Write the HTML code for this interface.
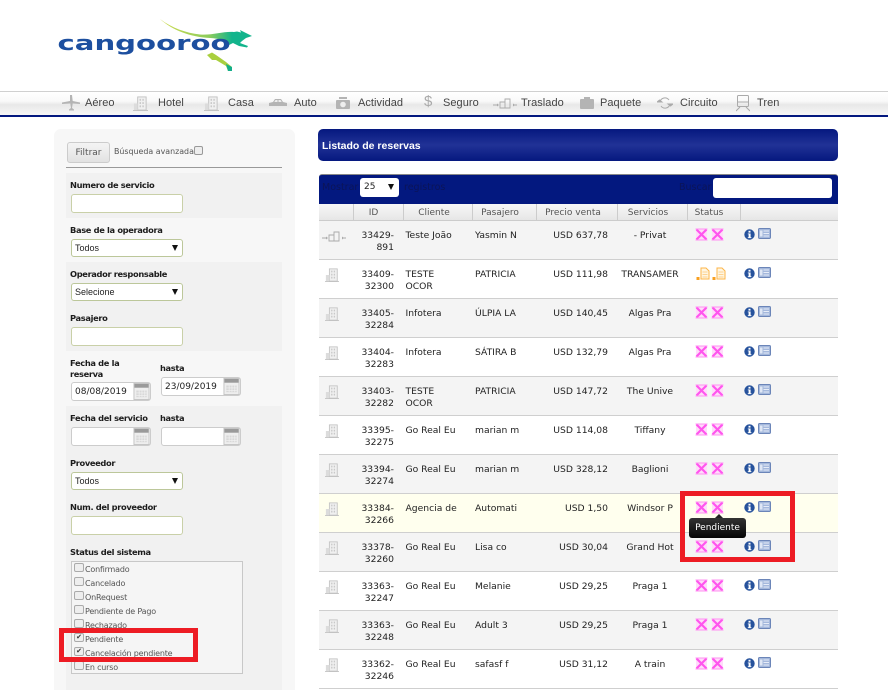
<!DOCTYPE html>
<html><head><meta charset="utf-8"><style>
*{box-sizing:border-box}
html,body{margin:0;padding:0;background:#fff}
body{width:888px;height:690px;overflow:hidden;position:relative;font-family:"DejaVu Sans",sans-serif;font-size:9px;color:#222}
.a{position:absolute}
.n{position:absolute;top:96px;font:11px/14px "Liberation Sans",sans-serif;color:#444;letter-spacing:.05px}
.ni{position:absolute;fill:#b4b4b4;stroke:none}
.l{position:absolute;left:70px;font:bold 8.3px/11px "DejaVu Sans",sans-serif;letter-spacing:-.35px;color:#1c1c1c;white-space:nowrap}
.in{position:absolute;background:#fff;border:1px solid #c9d0a8;border-radius:3px;height:19px;width:112px;left:71px}
.sel{position:absolute;background:#fff;border:1px solid #bcc79a;border-radius:3px;height:18px;width:112px;left:71px;font:9px/17px "Liberation Sans",sans-serif;padding-left:3px;color:#222}
.sel:after{content:"";position:absolute;right:4px;top:5px;border-left:3.5px solid transparent;border-right:3.5px solid transparent;border-top:6px solid #111}
.d{position:absolute;background:#fff;border:1px solid #ccc;border-radius:3px;height:19px;width:80px;font:9px/18px "DejaVu Sans",sans-serif;padding-left:3px;color:#222}
.cal{position:absolute;right:0;top:0}
.cb{position:absolute;left:74px;width:10px;height:9px;background:#eee;border:1px solid #aaa;border-radius:2px;font:bold 7px/7px "DejaVu Sans",sans-serif;color:#333;text-align:center}
.ct{position:absolute;left:85px;font:8px/11px "DejaVu Sans",sans-serif;letter-spacing:-.2px;color:#555;white-space:nowrap}
.r{position:absolute;left:319px;width:519px;height:39px;border-bottom:1px solid #cfcfcf;background:#fff}
.r.g{background:#f4f4f4}.r.y{background:#ffffee}
.r div{position:absolute;top:9px;line-height:11.5px;white-space:nowrap;color:#222;font-size:9.2px}
.r .id{left:34px;width:41px;text-align:right}
.r .c{left:86.5px}.r .p{left:156px}
.r .v{left:217px;width:72px;text-align:right}
.r .s{left:296px;width:70px;text-align:center}
.r svg{position:absolute}
.r .b{left:6px;top:8px}
.r .x1{left:376px;top:7px}.r .x2{left:392px;top:7px}
.r .in1{left:425px;top:8px}.r .ls{left:439px;top:7px}
.h{position:absolute;top:206px;font:9px/15px "DejaVu Sans",sans-serif;color:#555;text-align:center}
</style></head><body>
<svg width="0" height="0" style="position:absolute"><defs>
<linearGradient id="gl" gradientUnits="userSpaceOnUse" x1="160" y1="0" x2="250" y2="0"><stop offset="0" stop-color="#d0dc50"/><stop offset=".55" stop-color="#8ccc5c"/><stop offset=".8" stop-color="#12b48c"/><stop offset="1" stop-color="#12b48c"/></linearGradient>
<symbol id="bld" viewBox="0 0 16 16"><rect x="5" y="1" width="9" height="14" fill="#f0f0f0" stroke="#c2c2c2"/><path d="M1 8h4v7H1z" fill="#dcdcdc"/><path d="M7 3h1.500v2H7zM10 3h1.500v2H10zM7 6.500h1.500v2H7zM10 6.500h1.500v2H10zM7 10h1.500v2H7zM10 10h1.500v2H10z" fill="#c8c8c8"/><path d="M0 15.500h16" stroke="#c2c2c2"/></symbol>
<symbol id="tr" viewBox="0 0 24 12"><path d="M7 5h5v6H7zM12 2h5v9h-5z" fill="none" stroke="#aaa" stroke-width=".9"/><path d="M0 8h4M20 8h4" stroke="#aaa"/><path d="M4 6.500v3l2-1.500zM20 6.500v3l2-1.500z" fill="#aaa"/></symbol>
<symbol id="x" viewBox="0 0 13 13"><rect x="1" y="1" width="11" height="11" fill="#ffdcfa"/><path d="M1.500 1.500L11.500 11.500M11.500 1.500L1.500 11.500" stroke="#ff55ee" stroke-width="2.200"/><path d="M.5 1h12M.5 12h12" stroke="#ff90f2" stroke-width="1"/></symbol>
<symbol id="doc" viewBox="0 0 14 13"><path d="M5 1h5l3 3v8H5z" fill="#fff6e2" stroke="#fdb548"/><path d="M6.500 5h5M6.500 7.500h5M6.500 10h5" stroke="#fdc77a" stroke-width=".8"/><rect x="0.500" y="10" width="3" height="3" fill="#f9a020"/></symbol>
<symbol id="info" viewBox="0 0 11 11"><circle cx="5.500" cy="5.500" r="5.200" fill="#26529c"/><rect x="4.500" y="1.800" width="2" height="1.800" fill="#fff"/><path d="M3.800 4.500h2.800v3.800h.8v.8H3.800v-.8h.8V5.300h-.8z" fill="#fff"/></symbol>
<symbol id="lst" viewBox="0 0 13 11"><rect x=".5" y=".5" width="12" height="10" rx="1.200" fill="#a4b8dc" stroke="#6b85b8"/><rect x="2" y="2.500" width="2.500" height="6" fill="#dfe7f5"/><path d="M5.500 3h5.500M5.500 5.500h5.500M5.500 8h5.500" stroke="#e6ecf7"/></symbol>
<symbol id="cal" viewBox="0 0 17 18"><rect x=".5" y=".5" width="16" height="17" fill="#eee" stroke="#c4c4c4"/><rect x="1" y="1" width="15" height="4" fill="#9a9a9a"/><rect x="3" y="8" width="11" height="7" fill="#d8d8d8"/><path d="M3 10.500h11M3 13h11M6 8v7M9 8v7M12 8v7" stroke="#f4f4f4" stroke-width=".7"/></symbol>
</defs></svg>

<!-- logo -->
<svg class="a" style="left:50px;top:14px;filter:blur(.35px)" width="210" height="62" viewBox="50 14 210 62">
<path d="M160 19C172 28 186 33 200 34.500C212 35.500 224 31 234 32L237 31.500L241 32.500L240 30L246 33L252 36L246 38L242 41L240 43L248 46L247 47.500L239 46L233 43L229 45C226 41 220 38.500 210 38C190 37 172 30 160 19Z" fill="url(#gl)"/>
<path d="M207 55L212 52.500L216 55L226 62L232 67L232 71L228 71L226 66L216 60L212 60Z" fill="#a9cf3f"/>
<path d="M226 64L232 67L232 71L228 71Z" fill="#13ae8b"/>
<text x="57.500" y="50" font-family="'DejaVu Sans',sans-serif" font-weight="bold" font-size="20" fill="#1d4f9f" textLength="173" lengthAdjust="spacingAndGlyphs">cangooroo</text>
</svg>

<!-- nav -->
<div class="a" style="left:0;top:91px;width:888px;height:24px;border-top:1px solid #d0d0d0;background:linear-gradient(#fff 0,#f9f9f9 40%,#e8e8e8 55%,#f6f6f6 100%)"></div>
<div class="a" style="left:0;top:115px;width:888px;height:2px;background:#03187f"></div>
<svg class="ni" style="left:62px;top:95px" width="18" height="16" viewBox="0 0 18 16"><path d="M8 0h2l.7 6 7.300 1.500v1.500l-7.300-.5-.7 4.500 2 1.500v1H7v-1l2-1.500-.7-4.500-8.300.5V7.500L8 6z"/></svg><div class="n" style="left:85px">Aéreo</div>
<svg style="position:absolute;left:133px;top:96px" width="15" height="15"><use href="#bld"/></svg><div class="n" style="left:158px">Hotel</div>
<svg style="position:absolute;left:204px;top:96px" width="15" height="15"><use href="#bld"/></svg><div class="n" style="left:228px">Casa</div>
<svg class="ni" style="left:269px;top:98px" width="18" height="10" viewBox="0 0 18 10"><path d="M0 5l4-1 2-3h6l2 3 4 1v3H0z"/><path d="M6.500 2h2v2h-3.200zM9.500 2h2l1.200 2H9.500z" fill="#eee"/></svg><div class="n" style="left:294px">Auto</div>
<svg class="ni" style="left:336px;top:96px" width="14" height="14" viewBox="0 0 14 14"><path d="M3 1h8v2H3zM1 4h12a1 1 0 0 1 1 1v7a1 1 0 0 1-1 1H1a1 1 0 0 1-1-1V5a1 1 0 0 1 1-1z"/><circle cx="7" cy="8.500" r="2.800" fill="#eee"/></svg><div class="n" style="left:358px">Actividad</div>
<div class="n" style="left:424px;font-size:15px;color:#aaa;top:95px">$</div><div class="n" style="left:443px">Seguro</div>
<svg style="position:absolute;left:493px;top:97px" width="24" height="12"><use href="#tr"/></svg><div class="n" style="left:521px">Traslado</div>
<svg class="ni" style="left:580px;top:97px" width="14" height="12" viewBox="0 0 14 12"><path d="M4 0h6v2h3a1 1 0 0 1 1 1v8a1 1 0 0 1-1 1H1a1 1 0 0 1-1-1V3a1 1 0 0 1 1-1h3z"/></svg><div class="n" style="left:600px">Paquete</div>
<svg style="position:absolute;left:657px;top:96px" width="16" height="14" viewBox="0 0 16 14" fill="none" stroke="#aaa"><path d="M3 6a5 5 0 0 1 9-2M13 8a5 5 0 0 1-9 2"/><path d="M0 6h5L2.500 4zM11 8h5l-2.500 2z" fill="#aaa"/></svg><div class="n" style="left:680px">Circuito</div>
<svg style="position:absolute;left:736px;top:95px" width="14" height="17" viewBox="0 0 14 17" fill="none" stroke="#aaa"><rect x="1.500" y=".5" width="11" height="11" rx="1"/><path d="M1.500 7h11M0 16l4-4M14 16l-4-4" /></svg><div class="n" style="left:757px">Tren</div>

<!-- sidebar -->
<div class="a" style="left:54px;top:129px;width:241px;height:561px;background:#f7f7f7;border-radius:7px 7px 0 0"></div>
<div class="a" style="left:67px;top:142px;width:43px;height:21px;background:linear-gradient(#f4f4f4,#e2e2e2);border:1px solid #ccc;border-radius:3px;font:9px/20px 'DejaVu Sans',sans-serif;color:#555;text-align:center">Filtrar</div>
<div class="a" style="left:114px;top:146px;font:7.9px/12px 'DejaVu Sans',sans-serif;color:#555;white-space:nowrap">Búsqueda avanzada</div>
<div class="a" style="left:194px;top:146px;width:9px;height:9px;background:#eee;border:1px solid #999;border-radius:2px"></div>
<div class="a" style="left:66px;top:167px;width:216px;height:1px;background:#999"></div>
<div class="a" style="left:66px;top:173px;width:216px;height:45px;background:#f1f1f1"></div>
<div class="a" style="left:66px;top:262px;width:216px;height:89px;background:#f1f1f1"></div>
<div class="a" style="left:66px;top:406px;width:216px;height:284px;background:#f1f1f1"></div>

<div class="l" style="top:180px">Numero de servicio</div><div class="in" style="top:194px"></div>
<div class="l" style="top:225px">Base de la operadora</div><div class="sel" style="top:239px">Todos</div>
<div class="l" style="top:269px">Operador responsable</div><div class="sel" style="top:283px">Selecione</div>
<div class="l" style="top:313px">Pasajero</div><div class="in" style="top:327px"></div>
<div class="l" style="top:358px">Fecha de la<br>reserva</div><div class="l" style="left:160px;top:363px">hasta</div>
<div class="d" style="left:71px;top:382px">08/08/2019<svg class="cal" width="17" height="17"><use href="#cal"/></svg></div>
<div class="d" style="left:161px;top:377px">23/09/2019<svg class="cal" width="17" height="17"><use href="#cal"/></svg></div>
<div class="l" style="top:413px">Fecha del servicio</div><div class="l" style="left:160px;top:413px">hasta</div>
<div class="d" style="left:71px;top:427px"><svg class="cal" width="17" height="17"><use href="#cal"/></svg></div>
<div class="d" style="left:161px;top:427px"><svg class="cal" width="17" height="17"><use href="#cal"/></svg></div>
<div class="l" style="top:458px">Proveedor</div><div class="sel" style="top:472px">Todos</div>
<div class="l" style="top:502px">Num. del proveedor</div><div class="in" style="top:516px"></div>
<div class="l" style="top:547px">Status del sistema</div>
<div class="a" style="left:71px;top:561px;width:172px;height:113px;background:#f5f5f5;border:1px solid #c8c8c8"></div>
<div class="cb" style="top:563px"></div><div class="ct" style="top:564px">Confirmado</div>
<div class="cb" style="top:577px"></div><div class="ct" style="top:578px">Cancelado</div>
<div class="cb" style="top:591px"></div><div class="ct" style="top:592px">OnRequest</div>
<div class="cb" style="top:605px"></div><div class="ct" style="top:606px">Pendiente de Pago</div>
<div class="cb" style="top:619px"></div><div class="ct" style="top:620px">Rechazado</div>
<div class="cb" style="top:633px">✔</div><div class="ct" style="top:634px">Pendiente</div>
<div class="cb" style="top:647px">✔</div><div class="ct" style="top:648px">Cancelación pendiente</div>
<div class="cb" style="top:661px"></div><div class="ct" style="top:662px">En curso</div>
<div class="a" style="left:59px;top:628px;width:139px;height:34px;border:5px solid #ed1c24"></div>

<!-- title -->
<div class="a" style="left:318px;top:129px;width:520px;height:32px;border-radius:5px;background:linear-gradient(#05187f,#213296 50%,#05187f);color:#fff;font:bold 10.5px/12px 'Liberation Sans',sans-serif;padding:11px 0 0 4px">Listado de reservas</div>

<!-- table head -->
<div class="a" style="left:319px;top:174px;width:519px;height:30px;background:#03187f;border-top:1px solid #888;border-radius:3px 3px 0 0"></div>
<div class="a" style="left:322px;top:181px;font:9.5px/13px 'DejaVu Sans',sans-serif;color:#0b1458">Mostrar</div>
<div class="a" style="left:360px;top:178px;width:39px;height:19px;background:#fff;border-radius:3px;font:9px/19px 'DejaVu Sans',sans-serif;padding-left:4px;color:#222">25<span style="position:absolute;right:5px;top:6px;border-left:3.5px solid transparent;border-right:3.5px solid transparent;border-top:6px solid #111"></span></div>
<div class="a" style="left:404px;top:181px;font:9.5px/13px 'DejaVu Sans',sans-serif;color:#0b1458">registros</div>
<div class="a" style="left:679px;top:181px;font:9.5px/13px 'DejaVu Sans',sans-serif;color:#0b1458">Buscar</div>
<div class="a" style="left:713px;top:178px;width:119px;height:20px;background:#fff;border-radius:3px"></div>
<div class="a" style="left:319px;top:204px;width:519px;height:17px;background:linear-gradient(#f7f7f7,#e6e6e6);border-bottom:1px solid #ccc"></div>
<div class="a" style="left:353px;top:204px;width:1px;height:17px;background:#ccc"></div>
<div class="a" style="left:403px;top:204px;width:1px;height:17px;background:#ccc"></div>
<div class="a" style="left:472px;top:204px;width:1px;height:17px;background:#ccc"></div>
<div class="a" style="left:536px;top:204px;width:1px;height:17px;background:#ccc"></div>
<div class="a" style="left:617px;top:204px;width:1px;height:17px;background:#ccc"></div>
<div class="a" style="left:687px;top:204px;width:1px;height:17px;background:#ccc"></div>
<div class="a" style="left:740px;top:204px;width:1px;height:17px;background:#ccc"></div>
<div class="h" style="left:349px;width:49px">ID</div>
<div class="h" style="left:404px;width:60px">Cliente</div>
<div class="h" style="left:473px;width:54px">Pasajero</div>
<div class="h" style="left:537px;width:72px">Precio venta</div>
<div class="h" style="left:618px;width:60px">Servicios</div>
<div class="h" style="left:688px;width:42px">Status</div>

<!-- rows -->
<div class="r g" style="top:221px"><svg style="left:3px;top:9px" width="24" height="12"><use href="#tr"/></svg><div class="id">33429-<br>891</div><div class="c">Teste João</div><div class="p">Yasmin N</div><div class="v">USD 637,78</div><div class="s">- Privat</div><svg class="x1" width="13" height="13"><use href="#x"/></svg><svg class="x2" width="13" height="13"><use href="#x"/></svg><svg class="in1" width="11" height="11"><use href="#info"/></svg><svg class="ls" width="13" height="11"><use href="#lst"/></svg></div>
<div class="r" style="top:260px"><svg class="b" width="14" height="14"><use href="#bld"/></svg><div class="id">33409-<br>32300</div><div class="c">TESTE<br>OCOR</div><div class="p">PATRICIA</div><div class="v">USD 111,98</div><div class="s">TRANSAMER</div><svg style="left:377px;top:7px" width="14" height="13"><use href="#doc"/></svg><svg style="left:393px;top:7px" width="14" height="13"><use href="#doc"/></svg><svg class="in1" width="11" height="11"><use href="#info"/></svg><svg class="ls" width="13" height="11"><use href="#lst"/></svg></div>
<div class="r g" style="top:299px"><svg class="b" width="14" height="14"><use href="#bld"/></svg><div class="id">33405-<br>32284</div><div class="c">Infotera</div><div class="p">ÚLPIA LA</div><div class="v">USD 140,45</div><div class="s">Algas Pra</div><svg class="x1" width="13" height="13"><use href="#x"/></svg><svg class="x2" width="13" height="13"><use href="#x"/></svg><svg class="in1" width="11" height="11"><use href="#info"/></svg><svg class="ls" width="13" height="11"><use href="#lst"/></svg></div>
<div class="r" style="top:338px"><svg class="b" width="14" height="14"><use href="#bld"/></svg><div class="id">33404-<br>32283</div><div class="c">Infotera</div><div class="p">SÁTIRA B</div><div class="v">USD 132,79</div><div class="s">Algas Pra</div><svg class="x1" width="13" height="13"><use href="#x"/></svg><svg class="x2" width="13" height="13"><use href="#x"/></svg><svg class="in1" width="11" height="11"><use href="#info"/></svg><svg class="ls" width="13" height="11"><use href="#lst"/></svg></div>
<div class="r g" style="top:377px"><svg class="b" width="14" height="14"><use href="#bld"/></svg><div class="id">33403-<br>32282</div><div class="c">TESTE<br>OCOR</div><div class="p">PATRICIA</div><div class="v">USD 147,72</div><div class="s">The Unive</div><svg class="x1" width="13" height="13"><use href="#x"/></svg><svg class="x2" width="13" height="13"><use href="#x"/></svg><svg class="in1" width="11" height="11"><use href="#info"/></svg><svg class="ls" width="13" height="11"><use href="#lst"/></svg></div>
<div class="r" style="top:416px"><svg class="b" width="14" height="14"><use href="#bld"/></svg><div class="id">33395-<br>32275</div><div class="c">Go Real Eu</div><div class="p">marian m</div><div class="v">USD 114,08</div><div class="s">Tiffany</div><svg class="x1" width="13" height="13"><use href="#x"/></svg><svg class="x2" width="13" height="13"><use href="#x"/></svg><svg class="in1" width="11" height="11"><use href="#info"/></svg><svg class="ls" width="13" height="11"><use href="#lst"/></svg></div>
<div class="r g" style="top:455px"><svg class="b" width="14" height="14"><use href="#bld"/></svg><div class="id">33394-<br>32274</div><div class="c">Go Real Eu</div><div class="p">marian m</div><div class="v">USD 328,12</div><div class="s">Baglioni</div><svg class="x1" width="13" height="13"><use href="#x"/></svg><svg class="x2" width="13" height="13"><use href="#x"/></svg><svg class="in1" width="11" height="11"><use href="#info"/></svg><svg class="ls" width="13" height="11"><use href="#lst"/></svg></div>
<div class="r y" style="top:494px"><svg class="b" width="14" height="14"><use href="#bld"/></svg><div class="id">33384-<br>32266</div><div class="c">Agencia de</div><div class="p">Automati</div><div class="v">USD 1,50</div><div class="s">Windsor P</div><svg class="x1" width="13" height="13"><use href="#x"/></svg><svg class="x2" width="13" height="13"><use href="#x"/></svg><svg class="in1" width="11" height="11"><use href="#info"/></svg><svg class="ls" width="13" height="11"><use href="#lst"/></svg></div>
<div class="r g" style="top:533px"><svg class="b" width="14" height="14"><use href="#bld"/></svg><div class="id">33378-<br>32260</div><div class="c">Go Real Eu</div><div class="p">Lisa co</div><div class="v">USD 30,04</div><div class="s">Grand Hot</div><svg class="x1" width="13" height="13"><use href="#x"/></svg><svg class="x2" width="13" height="13"><use href="#x"/></svg><svg class="in1" width="11" height="11"><use href="#info"/></svg><svg class="ls" width="13" height="11"><use href="#lst"/></svg></div>
<div class="r" style="top:572px"><svg class="b" width="14" height="14"><use href="#bld"/></svg><div class="id">33363-<br>32247</div><div class="c">Go Real Eu</div><div class="p">Melanie</div><div class="v">USD 29,25</div><div class="s">Praga 1</div><svg class="x1" width="13" height="13"><use href="#x"/></svg><svg class="x2" width="13" height="13"><use href="#x"/></svg><svg class="in1" width="11" height="11"><use href="#info"/></svg><svg class="ls" width="13" height="11"><use href="#lst"/></svg></div>
<div class="r g" style="top:611px"><svg class="b" width="14" height="14"><use href="#bld"/></svg><div class="id">33363-<br>32248</div><div class="c">Go Real Eu</div><div class="p">Adult 3</div><div class="v">USD 29,25</div><div class="s">Praga 1</div><svg class="x1" width="13" height="13"><use href="#x"/></svg><svg class="x2" width="13" height="13"><use href="#x"/></svg><svg class="in1" width="11" height="11"><use href="#info"/></svg><svg class="ls" width="13" height="11"><use href="#lst"/></svg></div>
<div class="r" style="top:650px"><svg class="b" width="14" height="14"><use href="#bld"/></svg><div class="id">33362-<br>32246</div><div class="c">Go Real Eu</div><div class="p">safasf f</div><div class="v">USD 31,12</div><div class="s">A train</div><svg class="x1" width="13" height="13"><use href="#x"/></svg><svg class="x2" width="13" height="13"><use href="#x"/></svg><svg class="in1" width="11" height="11"><use href="#info"/></svg><svg class="ls" width="13" height="11"><use href="#lst"/></svg></div>

<!-- highlight + tooltip -->
<div class="a" style="left:680px;top:491px;width:115px;height:71px;border:5px solid #ed1c24"></div>
<div class="a" style="left:714px;top:514px;width:0;height:0;border-left:5px solid transparent;border-right:5px solid transparent;border-bottom:5px solid #222"></div>
<div class="a" style="left:689px;top:518px;width:57px;height:20px;background:linear-gradient(#333,#050505);border-radius:3px;color:#fff;font:9px/20px 'DejaVu Sans',sans-serif;text-align:center">Pendiente</div>
</body></html>
